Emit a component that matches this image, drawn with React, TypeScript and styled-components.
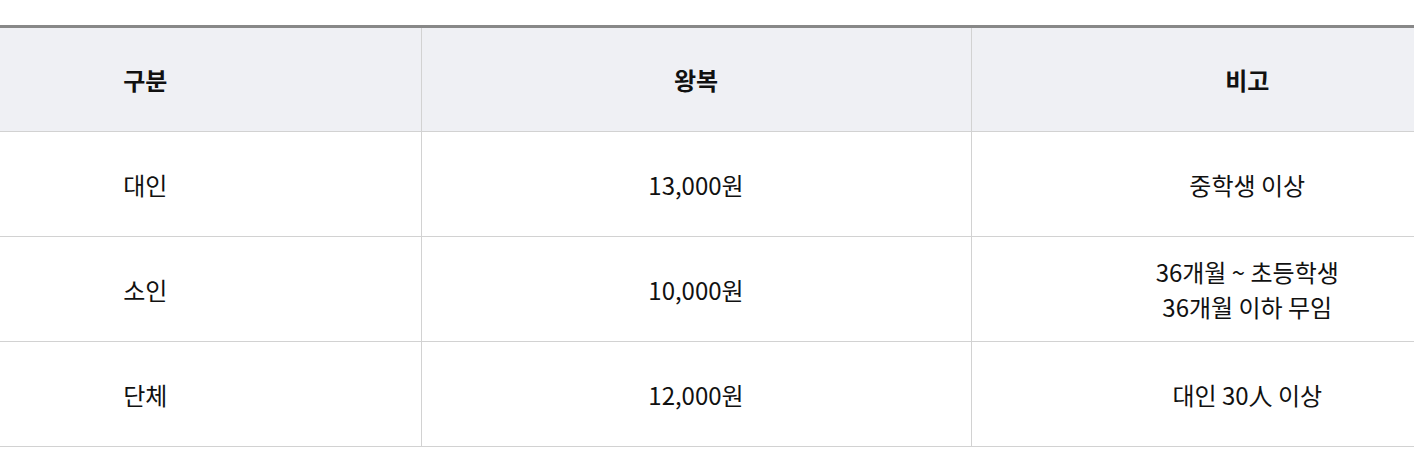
import React from "react";
import styled, { createGlobalStyle } from "styled-components";

const Global = createGlobalStyle`
  html, body { margin: 0; padding: 0; background: #fff; overflow: hidden; }
  body { font-family: "Noto Sans CJK KR", "Noto Sans", sans-serif; color: #111; }
`;

const Wrap = styled.div`
  padding-top: 25px;
  margin-left: -130px;
  width: 1653px;
`;

const Table = styled.table`
  width: 1653px;
  table-layout: fixed;
  border-collapse: collapse;
  border-top: 3px solid #888;
`;

const Th = styled.th`
  height: 103px;
  padding: 0;
  background: #eff0f4;
  font-size: 24px;
  font-weight: 700;
  color: #111;
  text-align: center;
  vertical-align: middle;
  border-left: 1px solid #d2d2d2;
  border-bottom: 1px solid #d2d2d2;
  &:first-child { border-left: none; }
`;

const Td = styled.td`
  height: 104px;
  padding: 0;
  font-size: 24px;
  font-weight: 400;
  line-height: 35px;
  color: #111;
  text-align: center;
  vertical-align: middle;
  border-left: 1px solid #d2d2d2;
  border-bottom: 1px solid #d2d2d2;
  &:first-child { border-left: none; }
`;

const rows: { kind: string; price: string; note: string[] }[] = [
  { kind: "대인", price: "13,000원", note: ["중학생 이상"] },
  { kind: "소인", price: "10,000원", note: ["36개월 ~ 초등학생", "36개월 이하 무임"] },
  { kind: "단체", price: "12,000원", note: ["대인 30人 이상"] },
];

export default function App() {
  return (
    <>
      <Global />
      <Wrap>
        <Table>
          <colgroup>
            <col style={{ width: 551 }} />
            <col style={{ width: 550 }} />
            <col style={{ width: 552 }} />
          </colgroup>
          <thead>
            <tr>
              <Th>구분</Th>
              <Th>왕복</Th>
              <Th>비고</Th>
            </tr>
          </thead>
          <tbody>
            {rows.map((r) => (
              <tr key={r.kind}>
                <Td>{r.kind}</Td>
                <Td>{r.price}</Td>
                <Td>
                  {r.note.map((n, i) => (
                    <React.Fragment key={i}>
                      {i > 0 && <br />}
                      {n}
                    </React.Fragment>
                  ))}
                </Td>
              </tr>
            ))}
          </tbody>
        </Table>
      </Wrap>
    </>
  );
}
